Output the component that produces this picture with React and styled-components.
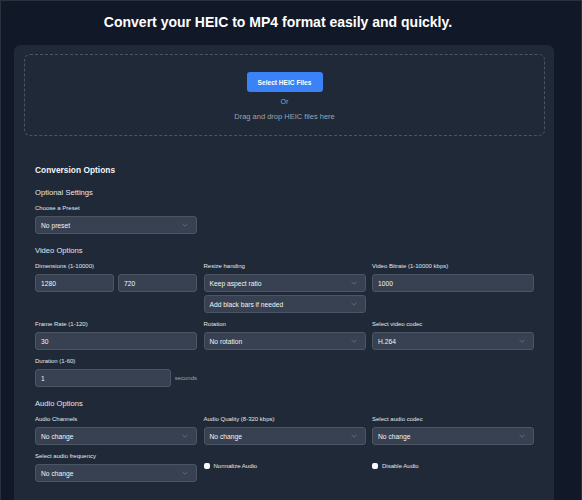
import React from 'react'
import styled, { createGlobalStyle } from 'styled-components'

const GlobalStyle = createGlobalStyle`
  html, body {
    margin: 0;
    padding: 0;
    background: #111827;
    font-family: "Liberation Sans", Arial, sans-serif;
  }
  * { box-sizing: border-box; }
`

const Page = styled.div`
  height: 500px;
  overflow: hidden;
  border: 1px solid #2b303b;
  border-bottom: none;
  padding: 0 27px 0 13px;
`

const Title = styled.h1`
  margin: 0;
  padding: 13px 12px 14px 0;
  text-align: center;
  color: #ffffff;
  font-size: 14px;
  font-weight: bold;
  line-height: 17px;
`

const Card = styled.div`
  background: #1f2937;
  border-radius: 6px;
  padding: 9px 9px 40px 10px;
`

const DropZone = styled.div`
  border: 1px dashed #4b5563;
  border-radius: 6px;
  height: 82px;
  display: flex;
  flex-direction: column;
  align-items: center;
  padding-top: 17px;
`

const PrimaryButton = styled.button`
  background: #3b82f6;
  color: #fff;
  border: none;
  border-radius: 3px;
  width: 76px;
  height: 20px;
  font-family: inherit;
  font-size: 6.6px;
  font-weight: bold;
  padding: 0;
`

const Or = styled.div`
  color: #9ca3af;
  font-size: 7px;
  margin-top: 6px;
`

const Hint = styled.div`
  color: #9ca3af;
  font-size: 7.5px;
  margin-top: 7px;
`

const Options = styled.div`
  padding: 29px 10px 0 11px;
`

const SectionTitle = styled.h2`
  margin: 0 0 12px;
  color: #f3f4f6;
  font-size: 8.4px;
  font-weight: bold;
  line-height: 11px;
`

const GroupTitle = styled.h3`
  margin: 0 0 6px;
  color: #e5e7eb;
  font-size: 7.6px;
  font-weight: normal;
  line-height: 10px;
`

const Grid = styled.div`
  display: grid;
  grid-template-columns: repeat(3, 162px);
  column-gap: 6.5px;
  row-gap: 7px;
  margin-bottom: 12px;
`

const Field = styled.div`
  display: flex;
  flex-direction: column;
  gap: 4px;
`

const Label = styled.label`
  color: #e5e7eb;
  font-size: 6px;
  line-height: 8px;
  height: 8px;
`

const Stack = styled.div`
  display: flex;
  flex-direction: ${p => (p.$row ? 'row' : 'column')};
  align-items: ${p => (p.$row ? 'center' : 'stretch')};
  gap: ${p => p.$gap || 3}px;
`

const Box = styled.div`
  height: 18px;
  width: ${p => p.$width || '100%'};
  background: #374151;
  border: 1px solid #4b5563;
  border-radius: 3px;
  display: flex;
  align-items: center;
  justify-content: space-between;
  padding: 0 8px 0 5px;
  color: #f3f4f6;
  font-size: 6.7px;
`

const Unit = styled.span`
  color: #9ca3af;
  font-size: 6px;
`

const Check = styled.div`
  align-self: start;
  display: flex;
  align-items: center;
  gap: 4px;
  color: #e5e7eb;
  font-size: 6px;
  line-height: 8px;
  padding-top: 10px;
`

const CheckBox = styled.span`
  width: 6px;
  height: 6px;
  border-radius: 2px;
  background: #f9fafb;
`

const Chevron = () => (
  <svg width="6" height="4" viewBox="0 0 6 4">
    <path d="M0.5 0.8 L3 3.2 L5.5 0.8" fill="none" stroke="#6b7280" strokeWidth="0.8" />
  </svg>
)

const Select = ({ value, width }) => (
  <Box $width={width}>
    <span>{value}</span>
    <Chevron />
  </Box>
)

const Input = ({ value, width }) => (
  <Box $width={width}>
    <span>{value}</span>
  </Box>
)

export default function App() {
  return (
    <>
      <GlobalStyle />
      <Page>
        <Title>Convert your HEIC to MP4 format easily and quickly.</Title>
        <Card>
          <DropZone>
            <PrimaryButton>Select HEIC Files</PrimaryButton>
            <Or>Or</Or>
            <Hint>Drag and drop HEIC files here</Hint>
          </DropZone>
          <Options>
            <SectionTitle>Conversion Options</SectionTitle>

            <GroupTitle>Optional Settings</GroupTitle>
            <Grid>
              <Field>
                <Label>Choose a Preset</Label>
                <Select value="No preset" />
              </Field>
            </Grid>

            <GroupTitle>Video Options</GroupTitle>
            <Grid>
              <Field>
                <Label>Dimensions (1-10000)</Label>
                <Stack $row $gap={4}>
                  <Input value="1280" />
                  <Input value="720" />
                </Stack>
              </Field>
              <Field>
                <Label>Resize handing</Label>
                <Stack>
                  <Select value="Keep aspect ratio" />
                  <Select value="Add black bars if needed" />
                </Stack>
              </Field>
              <Field>
                <Label>Video Bitrate (1-10000 kbps)</Label>
                <Input value="1000" />
              </Field>
              <Field>
                <Label>Frame Rate (1-120)</Label>
                <Input value="30" />
              </Field>
              <Field>
                <Label>Rotation</Label>
                <Select value="No rotation" />
              </Field>
              <Field>
                <Label>Select video codec</Label>
                <Select value="H.264" />
              </Field>
              <Field>
                <Label>Duration (1-60)</Label>
                <Stack $row $gap={4}>
                  <Input value="1" width="137px" />
                  <Unit>seconds</Unit>
                </Stack>
              </Field>
            </Grid>

            <GroupTitle>Audio Options</GroupTitle>
            <Grid>
              <Field>
                <Label>Audio Channels</Label>
                <Select value="No change" />
              </Field>
              <Field>
                <Label>Audio Quality (8-320 kbps)</Label>
                <Select value="No change" />
              </Field>
              <Field>
                <Label>Select audio codec</Label>
                <Select value="No change" />
              </Field>
              <Field>
                <Label>Select audio frequency</Label>
                <Select value="No change" />
              </Field>
              <Check>
                <CheckBox />
                Normalize Audio
              </Check>
              <Check>
                <CheckBox />
                Disable Audio
              </Check>
            </Grid>
          </Options>
        </Card>
      </Page>
    </>
  )
}
